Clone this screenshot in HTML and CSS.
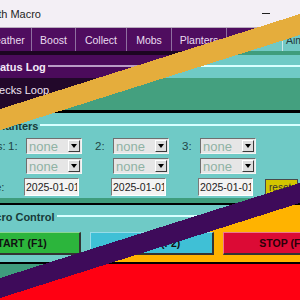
FILE: index.html
```html
<!DOCTYPE html>
<html lang="en">
<head>
  <meta charset="UTF-8">
  <title>Growth Macro</title>
  <link rel="stylesheet" href="styles.css">
</head>
<body>
  <div class="scene">
    <div class="layer theme-teal">
      <div class="app">
        <div class="titlebar">
          <div class="title"><span>Garden Growth Macro</span></div>
          <div class="win-controls">
            <span class="win-btn"><i class="min-glyph"></i></span>
            <span class="win-btn"></span>
            <span class="win-btn"></span>
          </div>
        </div>
        <div class="tabs">
          <div class="tab">Weather</div>
          <div class="tab">Boost</div>
          <div class="tab">Collect</div>
          <div class="tab">Mobs</div>
          <div class="tab">Planters</div>
          <div class="tab">Settings</div>
          <div class="tab tab-narrow">Aim</div>
        </div>
        <div class="frame frame-status">
          <div class="legend">Status Log</div>
          <div class="status-text">Checks Loop ...</div>
        </div>
        <div class="frame frame-planters">
          <div class="legend">Planters</div>
          <div class="planter-grid">
            <div class="row-label">Slots:</div>
            <div class="slot"><span class="slot-num">1:</span><div class="select"><span>none</span><b class="select-arrow"></b></div></div>
            <div class="slot"><span class="slot-num">2:</span><div class="select"><span>none</span><b class="select-arrow"></b></div></div>
            <div class="slot"><span class="slot-num">3:</span><div class="select"><span>none</span><b class="select-arrow"></b></div></div>
            <div></div>

            <div class="row-label"></div>
            <div class="slot"><span class="slot-num"></span><div class="select"><span>none</span><b class="select-arrow"></b></div></div>
            <div class="slot"><span class="slot-num"></span><div class="select"><span>none</span><b class="select-arrow"></b></div></div>
            <div class="slot"><span class="slot-num"></span><div class="select"><span>none</span><b class="select-arrow"></b></div></div>
            <div></div>

            <div class="row-label">Date:</div>
            <div class="slot"><input class="date" value="2025-01-01" readonly></div>
            <div class="slot"><input class="date" value="2025-01-01" readonly></div>
            <div class="slot"><input class="date" value="2025-01-01" readonly></div>
            <div><button class="reset">reset</button></div>
          </div>
        </div>
        <div class="frame frame-control">
          <div class="legend">Macro Control</div>
          <div class="control-buttons">
            <button class="btn btn-start">START (F1)</button>
            <button class="btn btn-pause">PAUSE (F2)</button>
            <button class="btn btn-stop">STOP (F3)</button>
          </div>
        </div>
      </div>
    </div>
    <svg class="stripes" viewBox="0 0 300 300" width="300" height="300" shape-rendering="crispEdges">
      <polygon fill="#e5ad3c" points="0,109 300,14 300,35 0,130"/>
      <polygon fill="#3e0b5a" points="0,278 300,183 300,203 0,298"/>
    </svg>
  </div>
  <script>
    // same window drawn in three themes, each shown in its own diagonal band
    const base = document.querySelector('.layer');
    [['theme-purple', 'layer-purple'], ['theme-red', 'layer-red']].forEach(([theme, band]) => {
      const copy = base.cloneNode(true);
      copy.className = `layer ${theme} ${band}`;
      base.after(copy);
    });
  </script>
</body>
</html>
```

FILE: styles.css
```css
* {
  margin: 0;
  padding: 0;
  box-sizing: border-box;
}
body {
  width: 300px;
  height: 300px;
  overflow: hidden;
  font-family: "Liberation Sans", Arial, sans-serif;
  font-size: 10.5px;
  background: #3f9d7d;
}
.scene {
  position: relative;
  width: 300px;
  height: 300px;
  overflow: hidden;
}
.layer {
  position: absolute;
  inset: 0;
  overflow: hidden;
}
.layer-purple {
  clip-path: polygon(0 0, 300px 0, 300px 24px, 0 119px);
}
.layer-red {
  clip-path: polygon(0 288px, 300px 193px, 300px 300px, 0 300px);
}
.stripes {
  position: absolute;
  top: 0;
  left: 0;
}

/* themes */
.theme-teal {
  --window: #3f9d7d;
  --tab: #72c9c5;
  --tab-edge: #a9b3b3;
  --tab-sep: #cfe9e8;
  --tab-text: #253a3a;
  --frame: #6fcac6;
  --legend: #183a38;
  --line: #d8ffff;
  --status-bg: #44a07f;
  --status-text: #0f2d25;
  --text: #1f4545;
}
.theme-purple {
  --window: #1d0522;
  --tab: #4f0d5f;
  --tab-edge: #b9aebe;
  --tab-sep: #8f70a0;
  --tab-text: #eadcf0;
  --frame: #4b0b5b;
  --legend: #f4e8f8;
  --line: #b99cc6;
  --status-bg: #22082a;
  --status-text: #efe4f3;
  --text: #eadcf0;
}
.theme-red {
  --window: #ff0012;
  --tab: #ffb300;
  --tab-edge: #a9a9a9;
  --tab-sep: #ffd36a;
  --tab-text: #3a1a00;
  --frame: #ffb300;
  --legend: #3a1a00;
  --line: transparent;
  --status-bg: #ff0012;
  --status-text: #2a0000;
  --text: #3a1a00;
}

.app {
  width: 431px;
  height: 300px;
  margin-left: -50px;
  background: var(--window);
}

/* window title */
.titlebar {
  height: 27px;
  display: flex;
  justify-content: space-between;
  align-items: center;
  background: #f3eff5;
  color: #1f1f1f;
  font-size: 11px;
}
.title {
  width: 91px;
  display: flex;
  justify-content: flex-end;
  white-space: nowrap;
}
.win-controls {
  display: flex;
  height: 100%;
}
.win-btn {
  width: 46px;
  display: grid;
  place-items: center;
}
.min-glyph {
  width: 8px;
  height: 1px;
  background: #1f1f1f;
}

/* notebook tabs */
.tabs {
  display: grid;
  grid-template-columns: 53px 44px 51px 45px 55px 56px 50px;
  height: 24px;
  padding-left: 28px;
  border-top: 1px solid var(--tab-edge);
  background: var(--tab);
}
.tab {
  display: grid;
  place-items: center;
  border-left: 1px solid var(--tab-sep);
  color: var(--tab-text);
  font-size: 10.5px;
}
.tab-narrow {
  place-items: center start;
  padding-left: 3px;
}

/* frames */
.frame {
  background: var(--frame);
}
.legend {
  display: flex;
  align-items: center;
  height: 23px;
  padding-left: 39px;
  font-weight: bold;
  font-size: 11px;
  color: var(--legend);
  white-space: nowrap;
}
.legend::after {
  content: "";
  flex: 1;
  height: 2px;
  margin: 0 0 2px 2px;
  background: var(--line);
}
.frame-status {
  margin-top: 4px;
}
.status-text {
  height: 32px;
  padding: 5px 0 0 35px;
  line-height: 14px;
  font-size: 11px;
  background: var(--status-bg);
  color: var(--status-text);
}

.frame-planters {
  border-top: 3px solid #000;
}
.frame-planters .legend {
  height: 25px;
  padding-left: 45px;
}
.planter-grid {
  display: grid;
  grid-template-columns: 18px repeat(3, 75px) auto;
  grid-template-rows: 16px 16px 18px;
  column-gap: 12px;
  row-gap: 4px;
  align-items: center;
  padding: 0 0 2px 27px;
  color: var(--text);
  font-size: 11.5px;
}
.row-label {
  white-space: nowrap;
}
.slot {
  display: flex;
  align-items: center;
}
.slot-num {
  width: 19px;
  padding-left: 1px;
}
.select {
  display: flex;
  align-items: center;
  width: 56px;
  height: 16px;
  padding-left: 2px;
  background: #e6e6e6;
  border: 1px solid;
  border-color: #6f6f6f #f4f4f4 #f4f4f4 #6f6f6f;
  color: #8fb2a4;
  font-size: 13px;
}
.select-arrow {
  display: grid;
  place-items: center;
  width: 12px;
  height: 12px;
  margin: 0 1px 0 auto;
  background: #dedede;
  border: 1px solid;
  border-color: #fff #3c3c3c #3c3c3c #fff;
}
.select-arrow::before {
  content: "";
  border-left: 3px solid transparent;
  border-right: 3px solid transparent;
  border-top: 4px solid #000;
}
.date {
  width: 55px;
  height: 18px;
  margin-left: 17px;
  padding: 0 1px;
  background: #f3f3f3;
  border: 1px solid;
  border-color: #7a7a7a #fff #fff #7a7a7a;
  font: 10.5px "Liberation Sans", Arial, sans-serif;
  color: #222;
  outline: none;
}
.reset {
  height: 16px;
  margin-left: -3px;
  padding: 0 6px 0 3px;
  background: #d3c500;
  border: 1px solid #4a4a4a;
  font: 10px "Liberation Sans", Arial, sans-serif;
  color: #333;
}

.frame-control {
  margin-top: 5px;
  border-top: 2px solid #000;
  border-bottom: 2px solid #000;
  padding-bottom: 7px;
}
.frame-control .legend {
  height: 24px;
  padding-left: 30px;
}
.control-buttons {
  display: grid;
  grid-template-columns: repeat(3, 124px);
  column-gap: 9px;
  margin-top: 3px;
  padding-left: 7px;
}
.btn {
  height: 23px;
  border: 1px solid;
  border-width: 1px 2px 2px 1px;
  border-color: rgba(255, 255, 255, 0.45) #333 #333 rgba(255, 255, 255, 0.45);
  font: bold 10.5px "Liberation Sans", Arial, sans-serif;
  color: #111;
}
.btn-start {
  background: #2cb53c;
}
.btn-pause {
  background: #3fc0d6;
}
.btn-stop {
  background: #dc0a35;
  color: #2a0008;
}
```
